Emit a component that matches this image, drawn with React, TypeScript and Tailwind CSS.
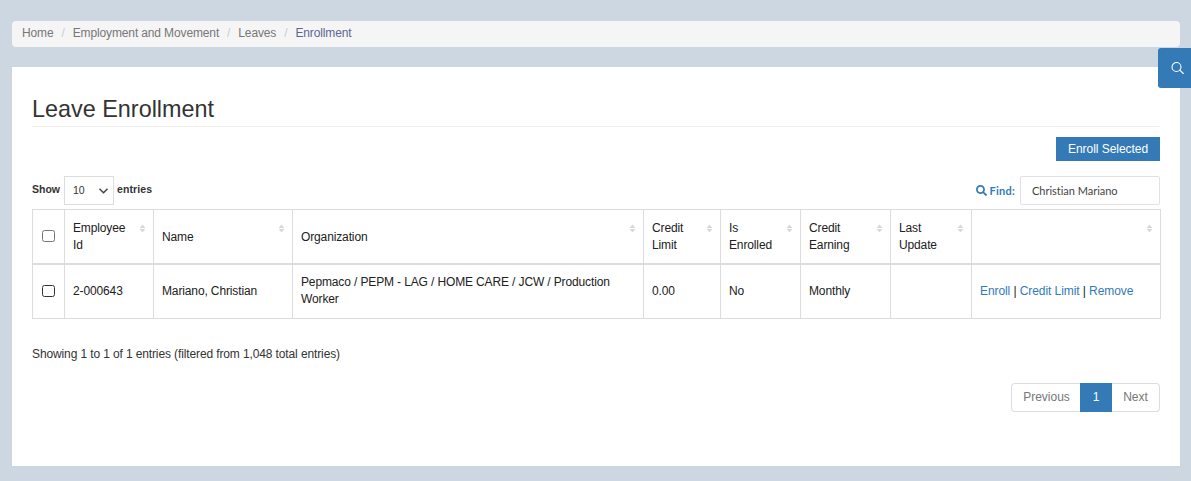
import { useState } from "react";
import { FaSearch } from "react-icons/fa";

type Column = { label: string; width: string };

const columns: Column[] = [
  { label: "Employee Id", width: "w-[89px]" },
  { label: "Name", width: "w-[139px]" },
  { label: "Organization", width: "w-[351px]" },
  { label: "Credit Limit", width: "w-[77px]" },
  { label: "Is Enrolled", width: "w-[80px]" },
  { label: "Credit Earning", width: "w-[90px]" },
  { label: "Last Update", width: "w-[81px]" },
  { label: "", width: "w-[189px]" },
];

const row = [
  "2-000643",
  "Mariano, Christian",
  "Pepmaco / PEPM - LAG / HOME CARE / JCW / Production Worker",
  "0.00",
  "No",
  "Monthly",
  "",
];

function SortIcon() {
  return (
    <svg className="mt-[14px] h-[9px] w-[7px] shrink-0 fill-[#d8d8d8]" viewBox="0 0 7 9">
      <path d="M3.5 0.6 6.4 3.9H0.6ZM3.5 8.4 0.6 5.1H6.4Z" />
    </svg>
  );
}

function Checkbox({ dark }: { dark?: boolean }) {
  return (
    <input
      type="checkbox"
      className={`block h-3 w-[13px] appearance-none rounded-[2.5px] border bg-white ${
        dark ? "border-[#333]" : "border-[#767676]"
      }`}
    />
  );
}

function Breadcrumb() {
  return (
    <nav className="flex h-[26px] items-center rounded-[4px] bg-[#f5f5f5] px-[10px] pb-[2px] text-[#777]">
      <a>Home</a>
      <span className="w-[19.2px] text-center text-[#ccc]">/</span>
      <a>Employment and Movement</a>
      <span className="w-[19.2px] text-center text-[#ccc]">/</span>
      <a>Leaves</a>
      <span className="w-[19.2px] text-center text-[#ccc]">/</span>
      <span className="text-[#5a6794]">Enrollment</span>
    </nav>
  );
}

export default function App() {
  const [query, setQuery] = useState("Christian Mariano");
  return (
    <div className="relative h-[481px] w-[1191px] overflow-hidden bg-[#cdd7e1] pt-[21px] pr-[11px] pl-3 font-['Liberation_Sans',Arial,sans-serif] text-[12px] leading-[17px] tracking-[-0.13px] text-[#212121]">
      <Breadcrumb />

      <button className="absolute top-[48px] right-0 flex h-10 w-[33px] items-center justify-center rounded-l-[3px] bg-[#337ab7] pl-[6px]">
        <svg className="size-[13px]" viewBox="0 0 13 13" fill="none" stroke="#fff" strokeWidth="1.1" strokeLinecap="round">
          <circle cx="5.5" cy="5" r="4.5" />
          <path d="m8.8 8.2 3.5 3.3" />
        </svg>
      </button>

      <main className="mt-5 h-[399px] bg-white px-5 pt-[25px]">
        <h1 className="h-[35px] border-b border-[#eee] pt-[3px] text-[23.4px] leading-[28px] tracking-normal text-[#333]">
          Leave Enrollment
        </h1>

        <div className="mt-[10px] flex justify-end">
          <button className="h-[24px] w-[104px] bg-[#337ab7] tracking-[-0.04px] text-white">
            Enroll Selected
          </button>
        </div>

        <div className="mt-[15px] flex h-[29px] items-center justify-between tracking-normal">
          <div className="flex items-center text-[10.5px] font-bold text-[#333]">
            <span className="w-[32px] pb-[2px]">Show</span>
            <button className="flex h-[29px] w-[50px] items-center justify-between border border-[#ddd] pr-[5px] pl-2 font-normal text-[#333]">
              10
              <svg className="h-[6px] w-[9px]" viewBox="0 0 9 6" fill="none" stroke="#444" strokeWidth="1.5">
                <path d="m0.5 0.8 4 4 4-4" />
              </svg>
            </button>
            <span className="ml-[3px] pb-[2px] tracking-[0.1px]">entries</span>
          </div>
          <label className="flex items-center font-['Lato',sans-serif] text-[11px] font-bold text-[#337ab7]">
            <FaSearch className="mr-[2px] size-[11px]" />
            <span className="tracking-[0.25px]">Find:</span>
            <input
              value={query}
              onChange={(e) => setQuery(e.target.value)}
              className="ml-[5px] h-[29px] w-[140px] rounded-[2px] border border-[#e2e2e2] px-[11px] font-normal tracking-[-0.02px] text-[#444] outline-none [font-variant-ligatures:none]"
            />
          </label>
        </div>

        <table className="mt-[4px] w-[1128px] table-fixed border-collapse border border-[#ddd]">
          <thead>
            <tr className="h-[54px] border-b-2 border-[#ddd]">
              <th className="w-[32px] border-r border-[#ddd] pl-[9px]">
                <Checkbox />
              </th>
              {columns.map((c, i) => (
                <th key={i} className={`${c.width} border-r border-[#ddd] p-0 text-left font-normal`}>
                  <div className="flex h-[52px] justify-between pr-[7px] pl-2">
                    <span className="w-min self-center pt-[2px]">{c.label}</span>
                    <SortIcon />
                  </div>
                </th>
              ))}
            </tr>
          </thead>
          <tbody>
            <tr className="h-[55px]">
              <td className="border-r border-[#ddd] p-0 pl-[9px]">
                <Checkbox dark />
              </td>
              {row.map((text, i) => (
                <td key={i} className="border-r border-[#ddd] px-2 py-0">
                  {text}
                </td>
              ))}
              <td className="px-2 py-0 tracking-[-0.08px]">
                <a className="text-[#337ab7]">Enroll</a> | <a className="text-[#337ab7]">Credit Limit</a> |{" "}
                <a className="text-[#337ab7]">Remove</a>
              </td>
            </tr>
          </tbody>
        </table>

        <p className="mt-[27px] tracking-[-0.12px] text-[#333]">
          Showing 1 to 1 of 1 entries (filtered from 1,048 total entries)
        </p>

        <div className="mt-[20px] flex h-[29px] justify-end tracking-normal text-[#777]">
          <button className="w-[69px] rounded-l-[4px] border border-r-0 border-[#ddd] pl-px">Previous</button>
          <button className="w-[32px] bg-[#337ab7] text-white">1</button>
          <button className="w-[48px] rounded-r-[4px] border border-l-0 border-[#ddd]">Next</button>
        </div>
      </main>
    </div>
  );
}
